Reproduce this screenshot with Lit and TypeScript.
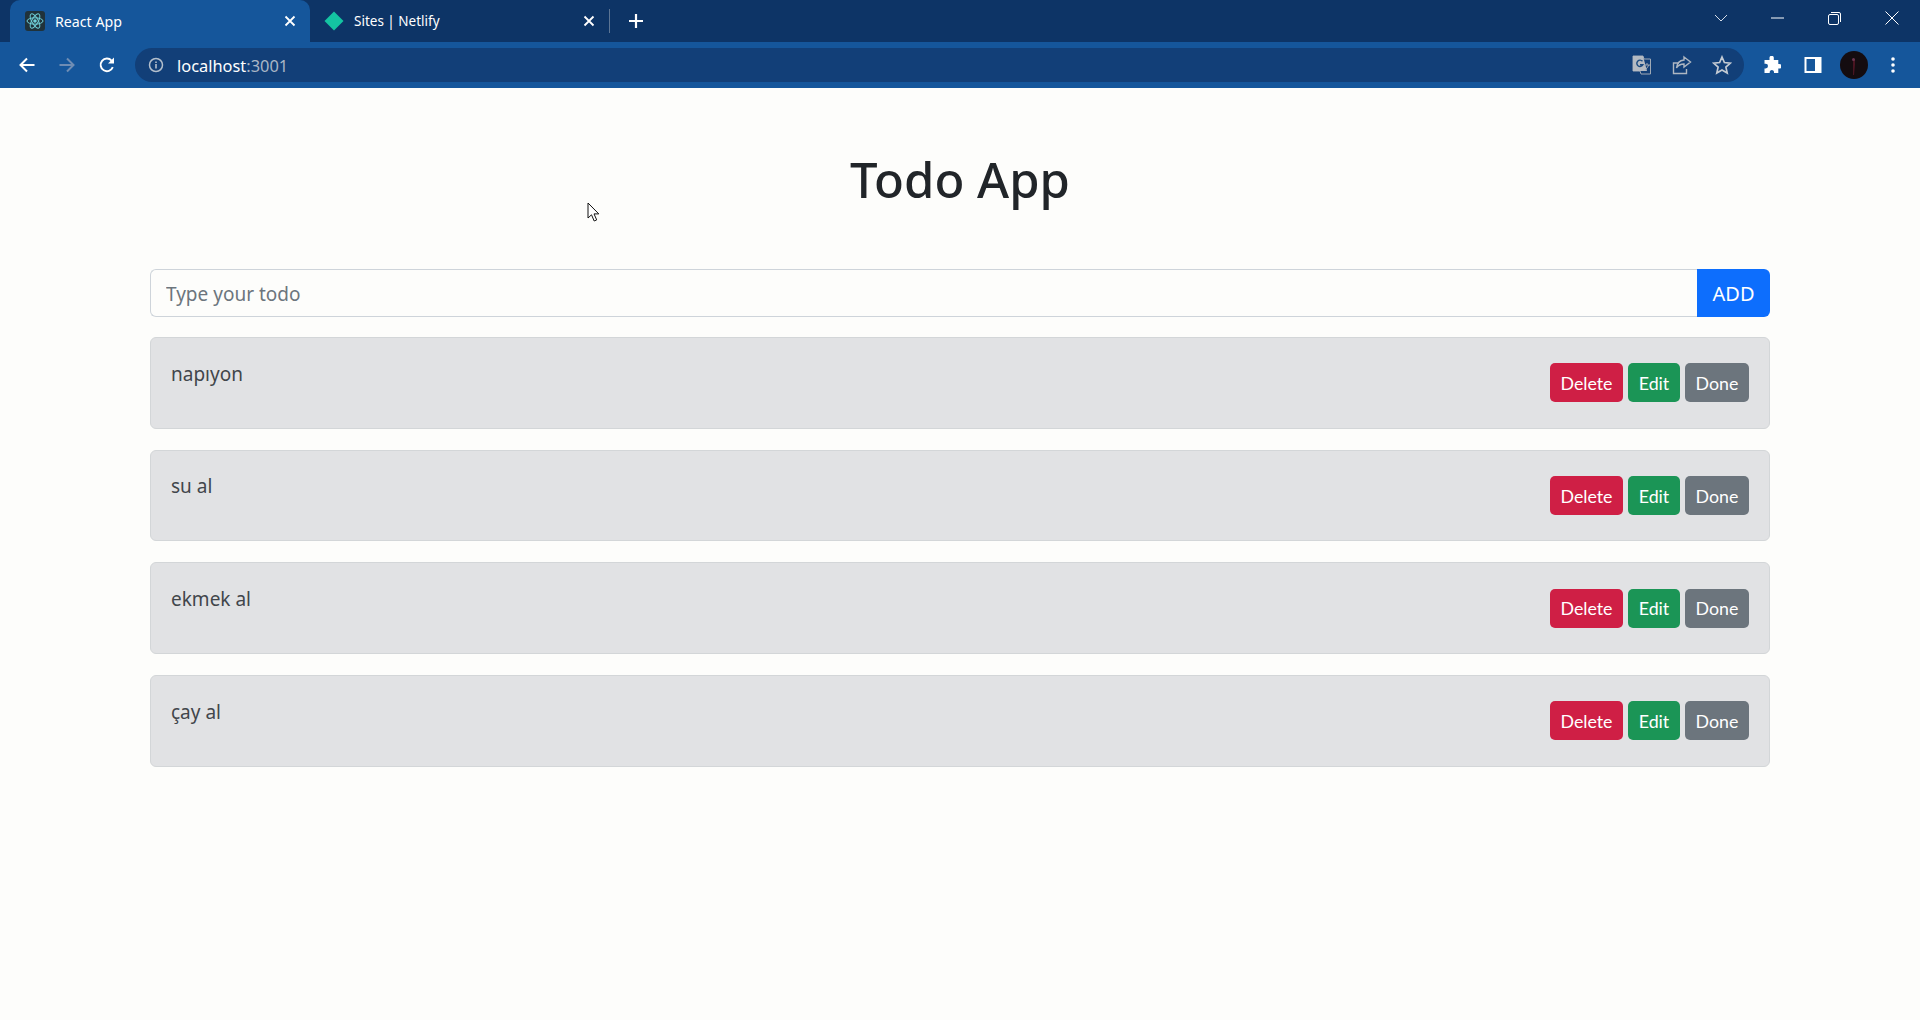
import { LitElement, html, css, svg } from 'lit';
import { customElement, state } from 'lit/decorators.js';

const closeIcon = html`<svg width="12" height="12" viewBox="0 0 12 12"><path d="M1.5 1.5l9 9M10.5 1.5l-9 9" stroke="#fff" stroke-width="1.8" fill="none"/></svg>`;

const reactIcon = html`<svg width="20" height="20" viewBox="0 0 20 20">
  <rect width="20" height="20" rx="3" fill="#20323a"/>
  <g fill="none" stroke="#6fd0d8" stroke-width="1">
    <ellipse cx="10" cy="10" rx="8" ry="3.2"/>
    <ellipse cx="10" cy="10" rx="8" ry="3.2" transform="rotate(60 10 10)"/>
    <ellipse cx="10" cy="10" rx="8" ry="3.2" transform="rotate(120 10 10)"/>
  </g>
  <circle cx="10" cy="10" r="1.8" fill="#6fd0d8"/>
</svg>`;

const netlifyIcon = html`<svg width="20" height="20" viewBox="0 0 20 20"><path d="M10 0.5L19.5 10 10 19.5 0.5 10z" fill="#14c4a2"/></svg>`;

const plusIcon = html`<svg width="16" height="16" viewBox="0 0 16 16"><path d="M8 1v14M1 8h14" stroke="#fff" stroke-width="2.2" fill="none"/></svg>`;

const arrow = (color: string, flip = false) => html`<svg width="18" height="18" viewBox="0 0 18 18" style=${flip ? 'transform:scaleX(-1)' : ''}><path d="M16.5 9H2.5M9 2.5L2.5 9 9 15.5" stroke=${color} stroke-width="2" fill="none"/></svg>`;

const reloadIcon = html`<svg width="18" height="18" viewBox="0 0 18 18"><path d="M14.8 11.2A6.3 6.3 0 1 1 13.6 4.6" stroke="#fff" stroke-width="1.9" fill="none"/><path d="M16 1.5v6h-6z" fill="#fff"/></svg>`;

const infoIcon = html`<svg width="16" height="16" viewBox="0 0 16 16"><circle cx="8" cy="8" r="6.5" stroke="#b4bfcc" stroke-width="1.5" fill="none"/><path d="M8 7v4.4M8 4.4v1.6" stroke="#b4bfcc" stroke-width="1.6"/></svg>`;

const translateIcon = html`<svg width="20" height="20" viewBox="0 0 20 20">
  <path d="M1 1h10l1 3h6.5v15H9l-1-3H1z" fill="none" stroke="#9fa9b5" stroke-width="1"/>
  <path d="M1 1h10l4 15H1z" fill="#b4bac2"/>
  <path d="M10.5 6.3a3.2 3.2 0 1 0 .4 3.4H8" fill="none" stroke="#1a4a80" stroke-width="1.4"/>
  <path d="M12 10h6M15 8v2M13.5 15l3.5-5" stroke="#9fa9b5" stroke-width="1" fill="none"/>
</svg>`;

const shareIcon = html`<svg width="20" height="20" viewBox="0 0 20 20"><path d="M7 8H1.5v10.5h13V14" fill="none" stroke="#aeb7c2" stroke-width="1.4"/><path d="M12 2l6.5 5-6.5 5V9c-4 0-6 1.5-7.500 4 .4-4.500 3-7.500 7.500-8z" fill="none" stroke="#aeb7c2" stroke-width="1.4"/></svg>`;

const starIcon = html`<svg width="20" height="20" viewBox="0 0 20 20"><path d="M10 2l2.400 5.500 6 .6-4.500 4 1.300 5.900L10 15l-5.200 3 1.300-5.900-4.500-4 6-.6z" fill="none" stroke="#c3cad3" stroke-width="1.700"/></svg>`;

const puzzleIcon = html`<svg width="18" height="18" viewBox="0 0 18 18"><path d="M6.500 1.500a2.200 2.200 0 0 1 4.300 0V4h4.500v4h1a2.300 2.300 0 0 1 0 4.600h-1V17h-4.300v-1.200a2.200 2.200 0 0 0-4.300 0V17H1.500v-4.600h1.200a2.300 2.300 0 0 0 0-4.600H1.500V4h5z" fill="#fff"/></svg>`;

const panelIcon = html`<svg width="18" height="18" viewBox="0 0 18 18"><path fill-rule="evenodd" d="M0.500 1h17v16h-17zM2.500 3v12h8.500V3z" fill="#fff"/></svg>`;

const avatar = html`<svg width="28" height="28" viewBox="0 0 28 28"><circle cx="14" cy="14" r="14" fill="#140c10"/><path d="M13 8h2v6l-1 10h-1z" fill="#4a1522"/><circle cx="13.500" cy="8.500" r="1.500" fill="#6b3550"/></svg>`;

const dots = html`<svg width="6" height="18" viewBox="0 0 6 18"><circle cx="3" cy="3" r="1.800" fill="#fff"/><circle cx="3" cy="9" r="1.800" fill="#fff"/><circle cx="3" cy="15" r="1.800" fill="#fff"/></svg>`;

const winIcons = [
  svg`<path d="M1 1l6 6 6-6" stroke="#d5dde8" fill="none"/>`,
];

@customElement('app-root')
export class AppRoot extends LitElement {
  @state() todos = ['napıyon', 'su al', 'ekmek al', 'çay al'];

  static styles = css`
    :host {
      display: block;
      position: relative;
      min-height: 1020px;
      background: #fdfdfb;
      font-family: 'Noto Sans', 'Open Sans', sans-serif;
      color: #212529;
      overflow: hidden;
    }
    .tabstrip {
      height: 42px;
      background: #0d3466;
      display: flex;
      align-items: stretch;
      padding-left: 10px;
      color: #fff;
      font-size: 13.500px;
    }
    .tab {
      width: 300px;
      box-sizing: border-box;
      display: flex;
      align-items: center;
      gap: 10px;
      padding: 0 14px 0 15px;
    }
    .tab.active {
      background: #15569b;
      border-radius: 10px 10px 0 0;
      font-size: 14.200px;
    }
    .tab .title { flex: 1; white-space: nowrap; }
    .tab.second { width: 298.500px; padding-left: 14px; }
    .divider { width: 1px; height: 24px; background: #5c7594; align-self: center; }
    .plus { margin-left: 18px; display: flex; align-items: center; }
    .winctl {
      margin-left: auto;
      display: flex;
      align-items: center;
      padding-bottom: 6px;
    }
    .winctl span { display: flex; justify-content: center; width: 57px; }
    .toolbar {
      height: 46px;
      background: #15569b;
      display: flex;
      align-items: center;
      padding-left: 18px;
      color: #fff;
    }
    .nav { display: flex; gap: 22px; align-items: center; }
    .omni {
      margin-left: 19px;
      width: 1609px;
      height: 34px;
      box-sizing: border-box;
      background: #123f78;
      border-radius: 17px;
      display: flex;
      align-items: center;
      padding: 0 12px 0 13px;
      font-size: 16.400px;
    }
    .url { margin-left: 13px; flex: 1; }
    .url span { color: #a9b6c6; }
    .omni-icons { display: flex; gap: 20px; align-items: center; }
    .tools {
      margin-left: 19px;
      display: flex;
      align-items: center;
      gap: 23px;
    }
    .tools .avatar { display: flex; margin: 0 -1px 0 -5px; }
    main { padding: 0 150px; }
    h1 {
      margin: 0;
      padding-top: 62px;
      text-align: center;
      font-size: 49px;
      line-height: 58px;
      font-weight: 500;
      box-sizing: content-box;
      height: 58px;
    }
    .entry {
      display: flex;
      height: 48px;
      margin-top: 61px;
      margin-bottom: 20px;
    }
    .entry input {
      flex: 1;
      min-width: 0;
      box-sizing: border-box;
      border: 1px solid #ced4da;
      border-right: none;
      border-radius: 6px 0 0 6px;
      padding: 1px 15px 0;
      font: inherit;
      font-size: 19px;
      background: #fdfdfb;
      outline: none;
    }
    .entry input::placeholder { color: #6c757d; opacity: 1; }
    .entry button {
      width: 73px;
      border: none;
      border-radius: 0 6px 6px 0;
      background: #0d6efd;
      color: #fff;
      font: inherit;
      font-size: 20px;
    }
    .todo {
      box-sizing: border-box;
      height: 91.700px;
      margin-bottom: 21px;
      border: 1px solid #d3d6d8;
      border-radius: 6px;
      background: #e1e2e4;
      display: flex;
      justify-content: space-between;
      align-items: center;
      padding: 0 20px;
      color: #41464b;
    }
    .todo .text { align-self: flex-start; padding-top: 22.500px; font-size: 19px; line-height: 27px; }
    .actions { display: flex; gap: 5px; }
    .actions button {
      height: 39px;
      border: none;
      border-radius: 5px;
      color: #fff;
      font-family: Lato, 'Noto Sans', sans-serif;
      font-size: 17.800px;
      padding: 0;
    }
    .delete { background: #cf1f45; width: 73px; }
    .edit { background: #1b9556; width: 52px; }
    .done { background: #6c757d; width: 64px; }
    .cursor { position: absolute; left: 587px; top: 202px; }
  `;

  render() {
    return html`
      <div class="tabstrip">
        <div class="tab active">${reactIcon}<span class="title">React App</span>${closeIcon}</div>
        <div class="tab second">${netlifyIcon}<span class="title">Sites | Netlify</span>${closeIcon}</div>
        <div class="divider"></div>
        <div class="plus">${plusIcon}</div>
        <div class="winctl">
          <span><svg width="14" height="8" viewBox="0 0 14 8">${winIcons[0]}</svg></span>
          <span><svg width="13" height="2" viewBox="0 0 13 2"><path d="M0 1h13" stroke="#fff"/></svg></span>
          <span><svg width="13" height="13" viewBox="0 0 13 13"><rect x="0.500" y="2.500" width="10" height="10" rx="1.500" fill="none" stroke="#fff"/><path d="M3 .5h8a1.500 1.500 0 0 1 1.500 1.500v8" fill="none" stroke="#fff"/></svg></span>
          <span><svg width="14" height="14" viewBox="0 0 14 14"><path d="M.5.5l13 13M13.500.5l-13 13" stroke="#fff" fill="none"/></svg></span>
        </div>
      </div>
      <div class="toolbar">
        <div class="nav">${arrow('#fff')}${arrow('#6f8db4', true)}${reloadIcon}</div>
        <div class="omni">
          ${infoIcon}
          <div class="url">localhost<span>:3001</span></div>
          <div class="omni-icons">${translateIcon}${shareIcon}${starIcon}</div>
        </div>
        <div class="tools">${puzzleIcon}${panelIcon}<span class="avatar">${avatar}</span>${dots}</div>
      </div>
      <main>
        <h1>Todo App</h1>
        <div class="entry">
          <input placeholder="Type your todo" />
          <button>ADD</button>
        </div>
        ${this.todos.map(
          (t) => html`
            <div class="todo">
              <span class="text">${t}</span>
              <div class="actions">
                <button class="delete">Delete</button>
                <button class="edit">Edit</button>
                <button class="done">Done</button>
              </div>
            </div>
          `
        )}
      </main>
      <svg class="cursor" width="14" height="21" viewBox="0 0 14 21"><path d="M1 1v15l3.500-3.200 2.700 6.200 2.500-1.100-2.700-6h4.800z" fill="#fff" stroke="#111" stroke-width="1"/></svg>
    `;
  }
}
